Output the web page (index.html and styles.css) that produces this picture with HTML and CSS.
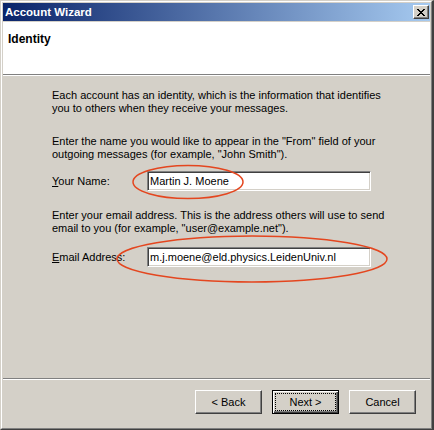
FILE: index.html
```html
<!DOCTYPE html>
<html lang="en">
<head>
    <meta charset="UTF-8">
    <title>Account Wizard</title>
    <link rel="stylesheet" href="styles.css">
</head>
<body>
    <div class="window">
        <div class="frame">
            <div class="titlebar">
                <span class="title">Account Wizard</span>
                <button class="close" title="Close">
                    <svg width="8" height="7" viewBox="0 0 8 7" shape-rendering="crispEdges">
                        <path d="M0 0h2v1H0z M6 0h2v1H6z M1 1h2v1H1z M5 1h2v1H5z M2 2h4v1H2z M3 3h2v1H3z M2 4h4v1H2z M1 5h2v1H1z M5 5h2v1H5z M0 6h2v1H0z M6 6h2v1H6z" fill="#000"/>
                    </svg>
                </button>
            </div>

            <div class="header">
                <h1>Identity</h1>
            </div>

            <div class="content">
                <p class="intro">Each account has an identity, which is the information that identifies<br>you to others when they receive your messages.</p>

                <p>Enter the name you would like to appear in the "From" field of your<br>outgoing messages (for example, "John Smith").</p>
                <div class="field">
                    <label><u>Y</u>our Name:</label>
                    <div class="input">Martin J. Moene</div>
                </div>

                <p class="email-note">Enter your email address. This is the address others will use to send<br>email to you (for example, "user@example.net").</p>
                <div class="field">
                    <label><u>E</u>mail Address:</label>
                    <div class="input">m.j.moene@eld.physics.LeidenUniv.nl</div>
                </div>
            </div>

            <div class="footer">
                <button class="btn">&lt; Back</button>
                <button class="btn default">Next &gt;</button>
                <button class="btn">Cancel</button>
            </div>
        </div>

        <!-- hand-drawn red circles over the two fields -->
        <svg class="marks" width="434" height="430" viewBox="0 0 434 430">
            <ellipse cx="188" cy="182" rx="55" ry="16.5" />
            <ellipse cx="252" cy="259" rx="135" ry="23" />
        </svg>
    </div>
</body>
</html>
```

FILE: styles.css
```css
* {
    box-sizing: border-box;
}

body {
    margin: 0;
    background: #d4d0c8;
    font-family: "Liberation Sans", Arial, sans-serif;
    font-size: 11px;
    color: #000;
}

.window {
    position: relative;
    width: 434px;
    height: 430px;
    border-style: solid;
    border-width: 1px 2px 1px 1px;
    border-color: #d4d0c8 #404040 #404040 #d4d0c8;
}

.frame {
    height: 100%;
    display: flex;
    flex-direction: column;
    padding: 1px;
    border: 1px solid;
    border-color: #fff #808080 #808080 #fff;
}

.titlebar {
    height: 18px;
    display: flex;
    align-items: center;
    justify-content: space-between;
    padding: 0 1px 0 2px;
    background: linear-gradient(to right, #0a246a, #a6caf0);
}

.title {
    color: #fff;
    font-weight: bold;
    font-size: 11.5px;
    line-height: 18px;
}

.close {
    width: 16px;
    height: 14px;
    padding: 0;
    display: flex;
    align-items: center;
    justify-content: center;
    background: #d4d0c8;
    border: 1px solid;
    border-color: #fff #404040 #404040 #fff;
    box-shadow: inset -1px -1px #808080;
}

.header {
    height: 54px;
    margin-top: 1px;
    padding: 11px 0 0 5px;
    background: #fff;
    border-bottom: 1px solid #fff;
    box-shadow: inset 0 -1px #808080;
}

h1 {
    margin: 0;
    font-size: 12px;
    font-weight: bold;
    line-height: 13px;
}

.content {
    height: 302px;
    padding: 13px 0 0 49px;
}

p {
    margin: 0 0 10px;
    line-height: 13px;
}

.intro {
    margin-bottom: 20px;
}

.email-note {
    margin: 18px 0 12px;
}

.field {
    display: flex;
    align-items: center;
    height: 20px;
}

.field label {
    width: 95px;
}

.input {
    width: 224px;
    height: 20px;
    padding: 1px 0 0 2px;
    line-height: 16px;
    background: #fff;
    border: 1px solid;
    border-color: #808080 #fff #fff #808080;
    box-shadow: inset 1px 1px #404040, inset -1px -1px #d4d0c8;
}

.footer {
    flex: 1;
    display: flex;
    justify-content: flex-end;
    gap: 10px;
    padding: 11px 14px 0 0;
    border-top: 1px solid #808080;
    box-shadow: inset 0 1px #fff;
}

.btn {
    width: 67px;
    height: 24px;
    padding: 0;
    font-family: inherit;
    font-size: 11px;
    color: #000;
    background: #d4d0c8;
    border: 1px solid;
    border-color: #fff #404040 #404040 #fff;
    box-shadow: inset -1px -1px #808080, inset 1px 1px #d4d0c8;
}

.btn.default {
    border-color: #000;
    box-shadow: inset 1px 1px #fff, inset -1px -1px #404040, inset -2px -2px #808080;
    outline: 1px dotted #000;
    outline-offset: -4px;
}

.marks {
    position: absolute;
    left: -1px;
    top: -1px;
    pointer-events: none;
}

.marks ellipse {
    fill: none;
    stroke: #e4461f;
    stroke-width: 1.5;
}
```
